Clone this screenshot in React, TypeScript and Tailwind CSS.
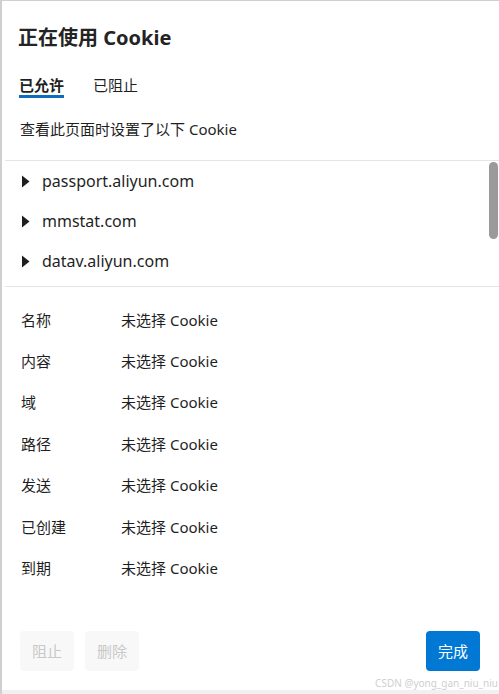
import React from 'react';

const domains = ['passport.aliyun.com', 'mmstat.com', 'datav.aliyun.com'];
const fields = ['名称', '内容', '域', '路径', '发送', '已创建', '到期'];

function Caret() {
  return (
    <svg width="9" height="13" viewBox="0 0 9 13" className="shrink-0">
      <path d="M1 0.5 L8.5 6.5 L1 12.5 Z" fill="#1f1f1f" />
    </svg>
  );
}

function App() {
  return (
    <div
      className="relative w-[499px] h-[694px] bg-white border-l-2 border-t border-[#cfcfcf] flex flex-col overflow-hidden text-[#1f1f1f]"
      style={{ fontFamily: '"Noto Sans", "Noto Sans CJK SC", sans-serif' }}
    >
      <header className="pl-[16px] pt-[23px]">
        <h1 className="text-[20px] leading-[28px] font-bold text-[#242424]">正在使用 Cookie</h1>
        <div className="mt-[23px] flex gap-[29px] pl-[1px]">
          <button className="text-[15px] leading-[20px] font-semibold border-b-[3px] border-[#0f6cbd]">已允许</button>
          <button className="text-[15px] leading-[20px] pb-[3px]">已阻止</button>
        </div>
        <p className="mt-[20px] text-[15px] leading-[22px] pl-[2px]">查看此页面时设置了以下 Cookie</p>
      </header>

      <div className="relative mt-[20px] ml-[3px] border-t border-[#e5e5e5] pb-[5px]">
        {domains.map((d) => (
          <div key={d} className="h-[40px] flex items-center pl-[16px] gap-[12px]">
            <Caret />
            <span className="text-[16px]">{d}</span>
          </div>
        ))}
        <div className="absolute right-[1px] top-[1px] w-[9px] h-[77px] rounded-full bg-[#9a9a9a]" />
      </div>

      <div className="ml-[3px] border-t border-[#e5e5e5] pt-[13px]">
        {fields.map((f, i) => (
          <div key={f} className={`flex items-center text-[15px] ${i < 3 ? 'h-[41px]' : 'h-[41.5px]'}`}>
            <span className="w-[116px] pl-[16px]">{f}</span>
            <span>未选择 Cookie</span>
          </div>
        ))}
      </div>

      <div className="flex-1" />

      <footer className="flex items-center justify-between pl-[18px] pr-[19px] pb-[19px]">
        <div className="flex gap-[11px]">
          <button className="w-[54px] h-[40px] rounded-[4px] bg-[#f8f8f8] text-[#c8c8c8] text-[15px]">阻止</button>
          <button className="w-[54px] h-[40px] rounded-[4px] bg-[#f8f8f8] text-[#c8c8c8] text-[15px]">删除</button>
        </div>
        <button className="w-[54px] h-[40px] rounded-[4px] bg-[#0078d4] text-white text-[15px]">完成</button>
      </footer>

      <div className="absolute right-[1px] bottom-[6px] text-[10px] leading-none text-[#cfcfcf] whitespace-nowrap">
        CSDN @yong_gan_niu_niu
      </div>
      <div className="h-[4px] bg-[#f0f0f0]" />
    </div>
  );
}

export default App;
